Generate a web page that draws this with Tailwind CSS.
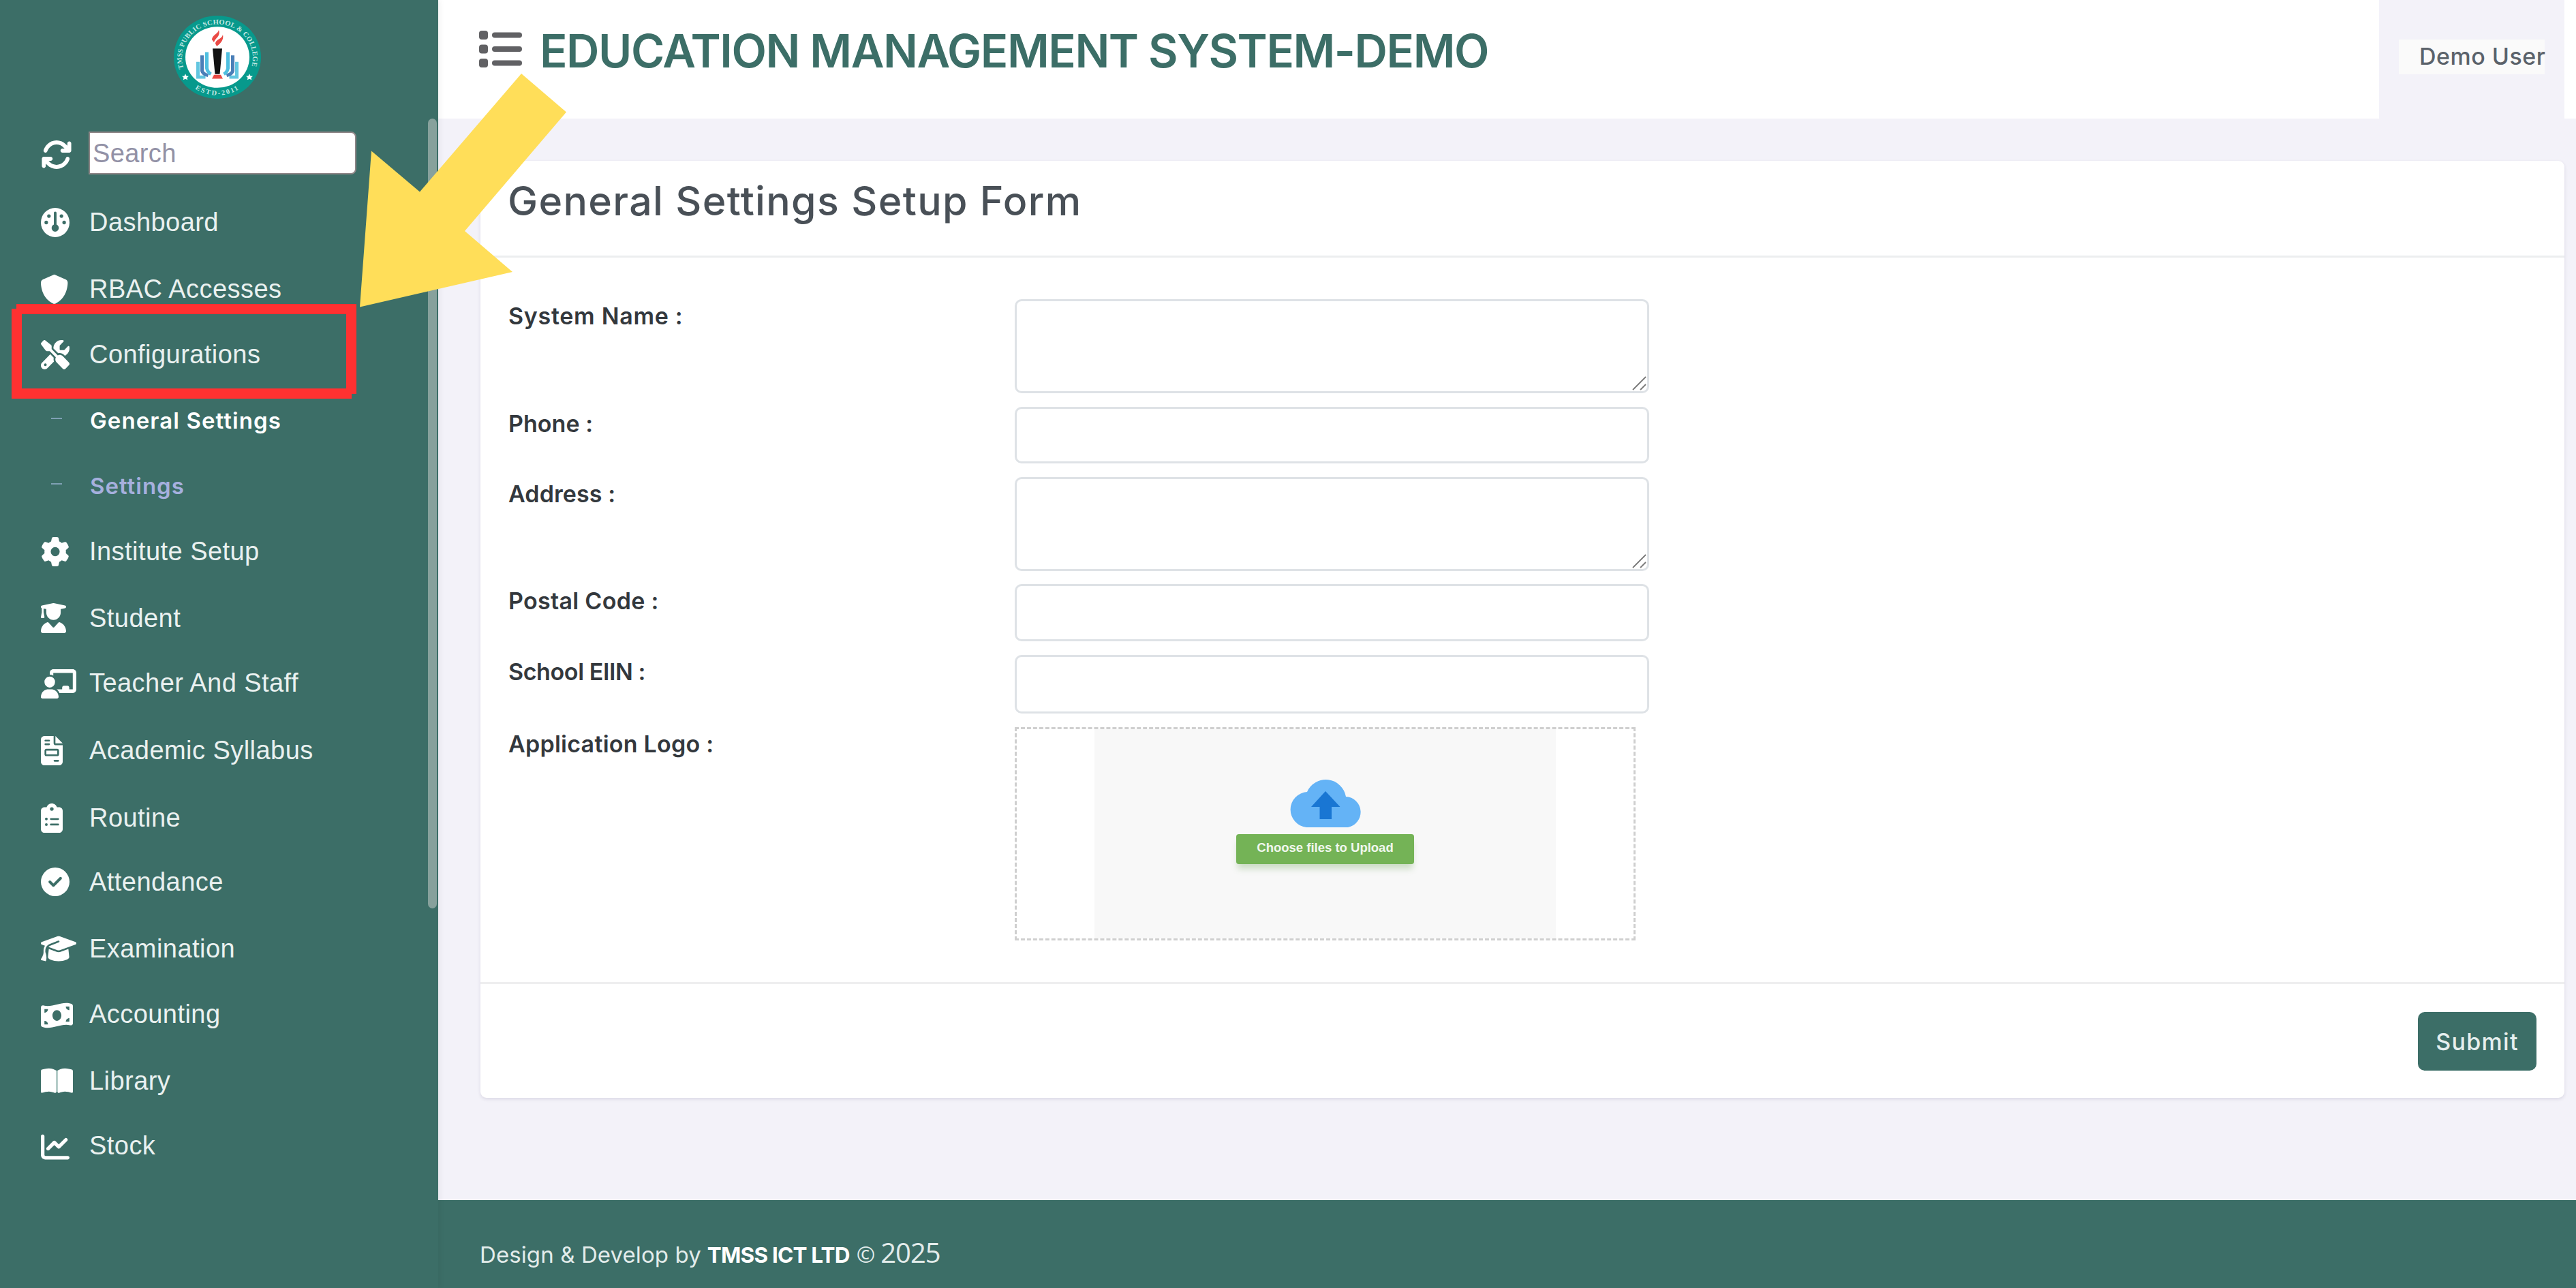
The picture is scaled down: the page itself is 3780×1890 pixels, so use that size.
<!DOCTYPE html>
<html lang="en">
<head>
<meta charset="utf-8">
<title>Education Management System</title>
<script src="https://cdn.jsdelivr.net/npm/@tailwindcss/browser@4"></script>
</head>
<body class="relative h-[1890px] w-[3780px] overflow-hidden bg-[#f3f2f9] font-['Inter',sans-serif]">
<div class="flex h-full">

  <!-- Sidebar -->
  <aside class="relative z-10 flex h-full w-[643px] shrink-0 flex-col bg-[#3c6e67] font-['Liberation_Sans',Arial,sans-serif] text-white shadow-[2px_0_8px_rgba(0,0,0,0.06)]">
    <div class="flex h-[193px] justify-center pr-[5px] pt-[23px]">
      <svg class="h-[122px] w-[128px]" viewBox="-64 -64 128 128" preserveAspectRatio="none">
        <defs>
          <path id="ringTop" d="M-49.5 17A52 52 0 1 1 49.5 17"/>
          <path id="ringBottom" d="M-37 45.5A59 59 0 0 0 37 45.5"/>
        </defs>
        <circle r="64" fill="#07998c"/>
        <circle r="47" fill="#fff"/>
        <g fill="#c4e8e3" font-family="Liberation Serif, serif" font-weight="700" font-size="10.5">
          <text><textPath href="#ringTop" textLength="192">TMSS PUBLIC SCHOOL &amp; COLLEGE</textPath></text>
          <text><textPath href="#ringBottom" startOffset="5" textLength="68">ESTD-2011</textPath></text>
        </g>
        <path fill="#fff" d="M-47 25.500l1.600 3.300 3.400.4-2.600 2.300.8 3.500-3.200-1.800-3.200 1.800.8-3.500-2.600-2.300 3.400-.4z"/>
        <path fill="#fff" d="M47 25.500l1.600 3.300 3.400.4-2.600 2.300.8 3.500-3.200-1.800-3.200 1.800.8-3.500-2.600-2.300 3.400-.4z"/>
        <path fill="#ea4a45" d="M2-42c-1 6-10 8-10 15l3 4C-3-30 5-32 2-42zM8-35C7-28-3-28-3-21l2 4C3-20 10-26 8-35z"/>
        <path fill="#111" d="M-7-13.500H7L3.500 26h-7z"/>
        <path fill="#ea4a45" d="M-5 27H5l3 6H-8z"/>
        <g id="pages" fill="none" stroke-width="5">
          <path stroke="#62c6e0" d="M-28.500 7V30.500h11"/>
          <path stroke="#4a7fb8" d="M-22.500-3V21q1 5 9 7"/>
          <path stroke="#4fbfe0" d="M-15.500-8V17q1 6 6 9"/>
        </g>
        <use href="#pages" transform="scale(-1 1)"/>
      </svg>
    </div>

    <div class="flex h-[88px] pl-[60px]">
      <svg class="mt-[10px] h-[48px] w-[46px] shrink-0" viewBox="0 0 512 512" preserveAspectRatio="none" fill="#fff"><path d="M105.100 202.600c7.700-21.800 20.200-42.300 37.800-59.800c62.500-62.500 163.800-62.500 226.300 0L386.300 160H352c-17.700 0-32 14.300-32 32s14.300 32 32 32H463.900c17.700 0 32-14.300 32-32V80c0-17.700-14.300-32-32-32s-32 14.300-32 32v35.200L414.400 97.600c-87.500-87.500-229.300-87.500-316.800 0C73.200 122 55.600 150.700 44.800 181.400c-5.900 16.700 2.900 34.900 19.500 40.800s34.900-2.900 40.800-19.500zM39 289.300c-5 1.500-9.800 4.200-13.700 8.200c-4 4-6.700 8.800-8.100 14c-.3 1.200-.6 2.500-.8 3.800c-.3 1.700-.4 3.400-.4 5.100V432c0 17.700 14.300 32 32 32s32-14.300 32-32V396.900l17.600 17.500c87.500 87.400 229.300 87.400 316.700 0c24.400-24.400 42.100-53.100 52.900-83.800c5.900-16.700-2.900-34.900-19.500-40.800s-34.900 2.900-40.800 19.500c-7.700 21.800-20.200 42.300-37.800 59.800c-62.500 62.500-163.800 62.500-226.300 0L125.600 352H160c17.700 0 32-14.300 32-32s-14.300-32-32-32H48.400c-3.200 0-6.400.4-9.400 1.300z"/></svg>
      <input type="text" placeholder="Search" class="ml-[24px] h-[63px] w-[393px] rounded-r-[8px] border-2 border-[#8d8586] bg-white px-[4px] pt-[2px] text-[38px] tracking-[0.4px] text-gray-700 placeholder:text-[#9291a6]">
    </div>

    <nav class="flex flex-col text-[38px] leading-[90px] tracking-[0.45px] text-[#eaf1f0]">
      <a class="flex h-[98px] pl-[60px]"><span class="flex h-[90px] w-[71px] items-center"><svg class="h-[43px] w-[42px]" viewBox="0 0 512 512" preserveAspectRatio="none" fill="#fff"><path d="M0 256a256 256 0 1 1 512 0A256 256 0 1 1 0 256zm320 96c0-26.900-16.500-49.900-40-59.300V88c0-13.300-10.700-24-24-24s-24 10.700-24 24V292.700c-23.500 9.500-40 32.500-40 59.300c0 35.300 28.700 64 64 64s64-28.700 64-64zM144 176a32 32 0 1 0 0-64 32 32 0 1 0 0 64zm-16 80a32 32 0 1 0 -64 0 32 32 0 1 0 64 0zm288 32a32 32 0 1 0 0-64 32 32 0 1 0 0 64zM400 144a32 32 0 1 0 -64 0 32 32 0 1 0 64 0z"/></svg></span>Dashboard</a>
      <a class="flex h-[96px] pl-[60px]"><span class="flex h-[90px] w-[71px] items-center"><svg class="h-[43px] w-[42px]" viewBox="16 0 512 512" preserveAspectRatio="none" fill="#fff"><path d="M256 0c4.600 0 9.200 1 13.400 2.900L457.700 82.800c22 9.300 38.400 31 38.300 57.200c-.5 99.200-41.300 280.700-213.600 363.200c-16.700 8-36.100 8-52.800 0C57.300 420.700 16.500 239.200 16 140c-.1-26.200 16.300-47.900 38.300-57.200L242.700 2.900C246.800 1 251.400 0 256 0z"/></svg></span>RBAC Accesses</a>
      <a class="flex h-[95px] pl-[60px]"><span class="flex h-[90px] w-[71px] items-center"><svg class="h-[43px] w-[42px]" viewBox="0 0 512 512" preserveAspectRatio="none" fill="#fff"><path d="M78.600 5C69.100-2.400 55.600-1.500 47 7L7 47c-8.500 8.500-9.400 22-2.100 31.600l80 104c4.500 5.900 11.600 9.400 19 9.400h54.100l109 109c-14.700 29-10 65.400 14.300 89.600l112 112c12.500 12.500 32.800 12.500 45.300 0l64-64c12.500-12.500 12.500-32.800 0-45.300l-112-112c-24.200-24.200-60.600-29-89.600-14.300l-109-109V104c0-7.500-3.500-14.500-9.400-19L78.600 5zM19.900 396.100C7.200 408.800 0 426.100 0 444.100C0 481.600 30.400 512 67.900 512c18 0 35.300-7.200 48-19.900L233.700 374.300c-7.800-20.900-9-43.600-3.600-65.100l-61.700-61.700L19.900 396.100zM512 144c0-10.500-1.100-20.700-3.200-30.500c-2.400-11.200-16.100-14.100-24.200-6l-63.900 63.900c-3 3-7.100 4.700-11.300 4.700H352c-8.800 0-16-7.200-16-16V102.600c0-4.200 1.700-8.300 4.700-11.300l63.900-63.900c8.100-8.100 5.200-21.800-6-24.200C388.700 1.100 378.500 0 368 0C288.500 0 224 64.500 224 144l0 .8 85.300 85.300c36-9.100 75.800 .5 104 28.700L429 274.500c49-23 83-72.800 83-130.500zM56 432a24 24 0 1 1 48 0 24 24 0 1 1 -48 0z"/></svg></span>Configurations</a>
      <a class="flex h-[96px] pl-[75px] font-['Inter',sans-serif] text-[33px] font-semibold leading-[94px] tracking-[1.1px] text-white"><span class="mt-[43px] mr-[41px] h-[2px] w-[16px] bg-[#7fa0b4]"></span>General Settings</a>
      <a class="flex h-[98px] pl-[75px] font-['Inter',sans-serif] text-[33px] font-semibold leading-[94px] tracking-[1px] text-[#a6b0de]"><span class="mt-[43px] mr-[41px] h-[2px] w-[16px] bg-[#7fa0b4]"></span>Settings</a>
      <a class="flex h-[98px] pl-[60px]"><span class="flex h-[90px] w-[71px] items-center"><svg class="h-[43px] w-[42px]" viewBox="0 0 512 512" preserveAspectRatio="none" fill="#fff"><path d="M495.900 166.600c3.200 8.700 .5 18.400-6.400 24.600l-43.300 39.400c1.100 8.300 1.700 16.800 1.700 25.400s-.6 17.100-1.700 25.400l43.300 39.400c6.900 6.200 9.600 15.900 6.400 24.600c-4.400 11.900-9.700 23.300-15.800 34.300l-4.700 8.100c-6.600 11-14 21.400-22.100 31.200c-5.900 7.200-15.700 9.600-24.500 6.800l-55.700-17.700c-13.400 10.300-28.200 18.900-44 25.400l-12.500 57.100c-2 9.100-9 16.300-18.200 17.800c-13.800 2.300-28 3.500-42.500 3.500s-28.700-1.200-42.500-3.500c-9.200-1.500-16.200-8.700-18.200-17.800l-12.500-57.100c-15.800-6.500-30.600-15.100-44-25.400L83.100 425.900c-8.800 2.800-18.600 .3-24.500-6.800c-8.100-9.800-15.500-20.200-22.100-31.200l-4.700-8.100c-6.100-11-11.400-22.400-15.800-34.300c-3.200-8.700-.5-18.400 6.400-24.600l43.300-39.400C64.600 273.100 64 264.600 64 256s.6-17.100 1.700-25.400L22.400 191.200c-6.900-6.200-9.600-15.900-6.400-24.600c4.400-11.900 9.700-23.300 15.800-34.300l4.700-8.100c6.600-11 14-21.400 22.100-31.200c5.900-7.200 15.700-9.600 24.500-6.800l55.700 17.700c13.400-10.300 28.200-18.900 44-25.400l12.500-57.100c2-9.100 9-16.300 18.200-17.800C227.300 1.200 241.500 0 256 0s28.700 1.200 42.500 3.500c9.200 1.500 16.200 8.700 18.200 17.800l12.500 57.100c15.800 6.500 30.600 15.100 44 25.400l55.700-17.700c8.800-2.800 18.600-.3 24.500 6.800c8.100 9.800 15.500 20.200 22.100 31.200l4.700 8.100c6.100 11 11.400 22.400 15.800 34.300zM256 336a80 80 0 1 0 0-160 80 80 0 1 0 0 160z"/></svg></span>Institute Setup</a>
      <a class="flex h-[95px] pl-[60px]"><span class="flex h-[90px] w-[71px] items-center"><svg class="h-[44px] w-[37px]" viewBox="0 0 448 512" preserveAspectRatio="none" fill="#fff"><path d="M219.300 .5c3.100-.6 6.300-.6 9.400 0l200 40C439.900 42.700 448 52.600 448 64s-8.100 21.300-19.300 23.500L352 102.900V160c0 70.700-57.300 128-128 128s-128-57.300-128-128V102.900L48 93.300v65.100l15.700 78.400c.9 4.700-.3 9.600-3.300 13.300s-7.600 5.900-12.400 5.900H16c-4.800 0-9.300-2.100-12.400-5.900s-4.300-8.600-3.300-13.300L16 158.400V86.600C6.500 83.300 0 74.300 0 64C0 52.600 8.100 42.700 19.300 40.500l200-40zM111.900 327.700c10.500-3.400 21.800 .4 29.400 8.500l71 75.500c6.300 6.700 17 6.700 23.300 0l71-75.500c7.600-8.100 18.900-11.900 29.400-8.500C401 348.600 448 409.400 448 481.300c0 17-13.800 30.700-30.700 30.700H30.700C13.800 512 0 498.200 0 481.300c0-71.900 47-132.700 111.900-153.600z"/></svg></span>Student</a>
      <a class="flex h-[99px] pl-[60px]"><span class="flex h-[90px] w-[71px] items-center"><svg class="mt-[3px] h-[43px] w-[52px]" viewBox="0 0 640 512" preserveAspectRatio="none" fill="#fff"><path d="M160 64c0-35.300 28.700-64 64-64H576c35.300 0 64 28.700 64 64V352c0 35.300-28.700 64-64 64H336.800c-11.800-25.500-29.900-47.500-52.400-64H384V320c0-17.700 14.300-32 32-32h64c17.700 0 32 14.300 32 32v32h64V64L224 64v49.100C205.200 102.200 183.300 96 160 96V64zm0 64a96 96 0 1 1 0 192 96 96 0 1 1 0-192zM133.300 352h53.300C260.300 352 320 411.700 320 485.300c0 14.700-11.900 26.700-26.700 26.700H26.700C11.900 512 0 500.100 0 485.300C0 411.700 59.700 352 133.300 352z"/></svg></span>Teacher And Staff</a>
      <a class="flex h-[99px] pl-[60px]"><span class="flex h-[90px] w-[71px] items-center"><svg class="h-[43px] w-[32px]" viewBox="0 0 384 512" preserveAspectRatio="none" fill="#fff"><path d="M64 0C28.700 0 0 28.700 0 64V448c0 35.300 28.700 64 64 64H320c35.300 0 64-28.700 64-64V160H256c-17.700 0-32-14.300-32-32V0H64zM256 0V128H384L256 0zM80 64h64c8.800 0 16 7.200 16 16s-7.200 16-16 16H80c-8.800 0-16-7.200-16-16s7.200-16 16-16zm0 64h64c8.800 0 16 7.200 16 16s-7.200 16-16 16H80c-8.800 0-16-7.200-16-16s7.200-16 16-16zm16 96H288c17.700 0 32 14.300 32 32v64c0 17.700-14.300 32-32 32H96c-17.700 0-32-14.300-32-32V256c0-17.700 14.300-32 32-32zm0 32v64H288V256H96zM240 416h64c8.800 0 16 7.200 16 16s-7.200 16-16 16H240c-8.800 0-16-7.200-16-16s7.200-16 16-16z"/></svg></span>Academic Syllabus</a>
      <a class="flex h-[94px] pl-[60px]"><span class="flex h-[90px] w-[71px] items-center"><svg class="h-[43px] w-[32px]" viewBox="0 0 384 512" preserveAspectRatio="none" fill="#fff"><path d="M192 0c-41.800 0-77.400 26.700-90.500 64H64C28.700 64 0 92.700 0 128V448c0 35.300 28.700 64 64 64H320c35.300 0 64-28.700 64-64V128c0-35.300-28.700-64-64-64H282.500C269.400 26.700 233.800 0 192 0zm0 64a32 32 0 1 1 0 64 32 32 0 1 1 0-64zM72 272a24 24 0 1 1 48 0 24 24 0 1 1 -48 0zm104-16H304c8.800 0 16 7.200 16 16s-7.200 16-16 16H176c-8.800 0-16-7.200-16-16s7.200-16 16-16zM72 368a24 24 0 1 1 48 0 24 24 0 1 1 -48 0zm88 0c0-8.800 7.200-16 16-16H304c8.800 0 16 7.200 16 16s-7.200 16-16 16H176c-8.800 0-16-7.200-16-16z"/></svg></span>Routine</a>
      <a class="flex h-[98px] pl-[60px]"><span class="flex h-[90px] w-[71px] items-center"><svg class="h-[42px] w-[42px]" viewBox="0 0 512 512" preserveAspectRatio="none" fill="#fff"><path d="M256 512A256 256 0 1 0 256 0a256 256 0 1 0 0 512zM369 209L241 337c-9.400 9.400-24.600 9.400-33.900 0l-64-64c-9.400-9.400-9.400-24.600 0-33.900s24.600-9.400 33.900 0l47 47L335 175c9.400-9.400 24.600-9.400 33.900 0s9.400 24.600 0 33.900z"/></svg></span>Attendance</a>
      <a class="flex h-[96px] pl-[60px]"><span class="flex h-[90px] w-[71px] items-center"><svg class="h-[42px] w-[52px]" viewBox="0 0 640 512" preserveAspectRatio="none" fill="#fff"><path d="M320 32c-8.100 0-16.100 1.400-23.700 4.100L15.800 137.400C6.300 140.900 0 149.900 0 160s6.300 19.100 15.800 22.600l57.900 20.900C57.300 229.300 48 259.800 48 291.900v28.100c0 28.400-10.800 57.700-22.300 80.800c-6.500 13-13.900 25.800-22.500 37.600C0 442.700-.9 448.300 .9 453.400s6 8.900 11.200 10.200l64 16c4.200 1.100 8.700 .3 12.400-2s6.300-6.100 7.100-10.400c8.600-42.800 4.300-81.200-2.100-108.700C90.300 344.300 86 329.800 80 316.500V291.900c0-30.200 10.200-58.700 27.900-81.500c12.900-15.500 29.600-28 49.200-35.700l157-61.700c8.200-3.200 17.500 .8 20.700 9s-.8 17.500-9 20.700l-157 61.700c-12.400 4.900-23.300 12.400-32.200 21.600l159.600 57.600c7.600 2.700 15.600 4.100 23.700 4.100s16.100-1.400 23.700-4.100L624.200 182.600c9.500-3.400 15.800-12.500 15.800-22.600s-6.300-19.100-15.800-22.600L343.700 36.100C336.100 33.400 328.100 32 320 32zM128 408c0 35.300 86 72 192 72s192-36.700 192-72L496.700 262.600 354.500 314c-11.100 4-22.800 6-34.500 6s-23.500-2-34.500-6L143.300 262.600 128 408z"/></svg></span>Examination</a>
      <a class="flex h-[98px] pl-[60px]"><span class="flex h-[90px] w-[71px] items-center"><svg class="mt-[3px] h-[42px] w-[47px]" viewBox="0 0 576 512" preserveAspectRatio="none" fill="#fff"><path d="M0 112.500V422.300c0 18 10.100 35 27 41.300c87 32.500 174 10.300 261-11.900c79.800-20.300 159.600-40.700 239.300-18.900c23 6.300 48.700-9.500 48.700-33.400V89.700c0-18-10.100-35-27-41.300C462 15.900 375 38.100 288 60.300C208.200 80.600 128.400 100.900 48.700 79.100C25.600 72.800 0 88.600 0 112.500zM288 352c-44.200 0-80-43-80-96s35.800-96 80-96s80 43 80 96s-35.800 96-80 96zM64 352c35.300 0 64 28.700 64 64H64V352zm64-208c0 35.300-28.700 64-64 64V144h64zM512 304v64H448c0-35.300 28.700-64 64-64zM448 96h64v64c-35.300 0-64-28.700-64-64z"/></svg></span>Accounting</a>
      <a class="flex h-[95px] pl-[60px]"><span class="flex h-[90px] w-[71px] items-center"><svg class="h-[42px] w-[47px]" viewBox="0 0 576 512" preserveAspectRatio="none" fill="#fff"><path fill="#a9c4c0" d="M265 70h46v390h-46z"/><path d="M249.600 471.500c10.800 3.800 22.400-4.100 22.400-15.500V78.600c0-4.200-1.600-8.400-5-11C247.400 52 202.400 32 144 32C93.500 32 46.300 45.300 18.100 56.100C6.800 60.500 0 71.700 0 83.800V454.100c0 11.900 12.800 20.200 24.100 16.500C55.600 460.100 105.500 448 144 448c33.900 0 79 14 105.600 23.500zm76.800 0C353 462 398.100 448 432 448c38.500 0 88.400 12.100 119.900 22.600c11.300 3.800 24.100-4.600 24.100-16.500V83.800c0-12.100-6.800-23.300-18.100-27.600C529.700 45.300 482.500 32 432 32c-58.400 0-103.400 20-123 35.600c-3.300 2.600-5 6.800-5 11V456c0 11.400 11.700 19.300 22.400 15.500z"/></svg></span>Library</a>
      <a class="flex h-[96px] pl-[60px]"><span class="flex h-[90px] w-[71px] items-center"><svg class="mt-[4px] h-[42px] w-[42px]" viewBox="0 0 512 512" preserveAspectRatio="none" fill="#fff"><path d="M64 64c0-17.700-14.300-32-32-32S0 46.300 0 64V400c0 44.200 35.800 80 80 80H480c17.700 0 32-14.300 32-32s-14.300-32-32-32H80c-8.800 0-16-7.200-16-16V64zm406.600 86.600c12.500-12.500 12.500-32.800 0-45.300s-32.800-12.500-45.300 0L320 210.700l-57.400-57.400c-12.500-12.500-32.800-12.500-45.300 0l-112 112c-12.500 12.500-12.500 32.800 0 45.300s32.800 12.500 45.300 0L240 221.300l57.400 57.400c12.500 12.500 32.800 12.500 45.300 0l128-128z"/></svg></span>Stock</a>
    </nav>

    <!-- Scroll thumb -->
    <div class="absolute right-[2px] top-[174px] h-[1159px] w-[13px] rounded-full bg-[#87a19c]"></div>
  </aside>

  <!-- Page -->
  <div class="flex flex-1 flex-col">
    <header class="flex h-[174px] bg-white pl-[60px] pr-[17px]">
      <svg class="mt-[44px] h-[56px] w-[63px]" viewBox="0 0 63 56" fill="#616164">
        <rect x="0" y="1" width="13" height="13" rx="4"/><rect x="0" y="21.500" width="13" height="13" rx="4"/><rect x="0" y="42" width="13" height="13" rx="4"/>
        <rect x="19" y="3.500" width="44" height="8" rx="4"/><rect x="19" y="24" width="44" height="8" rx="4"/><rect x="19" y="44.500" width="44" height="8" rx="4"/>
      </svg>
      <h1 class="ml-[26px] whitespace-nowrap text-[67px] font-semibold leading-[149px] tracking-[-1.45px] text-[#3c6e67]">EDUCATION MANAGEMENT SYSTEM-DEMO</h1>
      <div class="ml-auto w-[272px] bg-[#f3f2f9] pl-[29px] pt-[58px]">
        <div class="h-[51px] w-[214px] whitespace-nowrap bg-[#fafafa] pl-[30px] text-[34px] font-medium leading-[49px] tracking-[0.5px] text-[#5b626a]">Demo User</div>
      </div>
    </header>

    <main class="flex-1 pl-[62px] pr-[17px] pt-[62px]">
      <section class="rounded-[9px] bg-white shadow-[0_2px_5px_rgba(40,30,80,0.12)]">
        <h2 class="h-[142px] border-b-3 border-[#eceeef] pl-[40px] text-[59px] font-medium leading-[118px] tracking-[1.35px] text-[#495057]">General Settings Setup Form</h2>

        <form class="flex flex-col pb-[61px] pl-[41px] pt-[61px] text-[34px] font-semibold leading-[50px] text-[#33383d]">
          <div class="mb-[20px] flex"><label class="w-[743px] tracking-[0.7px]">System Name :</label>
            <div class="flex h-[138px] w-[931px] items-end justify-end rounded-[10px] border-3 border-[#dee2e6] p-[1px]"><svg class="h-[21px] w-[21px]" viewBox="0 0 21 21" fill="none" stroke="#7a7a7a" stroke-width="1.800"><path d="M1 20L20 1M12 20L20 12"/></svg></div></div>
          <div class="mb-[20px] flex"><label class="w-[743px] tracking-[0.05px]">Phone :</label><input class="h-[83px] w-[931px] rounded-[10px] border-3 border-[#dee2e6]"></div>
          <div class="mb-[19px] flex"><label class="w-[743px] tracking-[0.1px]">Address :</label>
            <div class="flex h-[138px] w-[931px] items-end justify-end rounded-[10px] border-3 border-[#dee2e6] p-[1px]"><svg class="h-[21px] w-[21px]" viewBox="0 0 21 21" fill="none" stroke="#7a7a7a" stroke-width="1.800"><path d="M1 20L20 1M12 20L20 12"/></svg></div></div>
          <div class="mb-[20px] flex"><label class="w-[743px] tracking-[0.3px]">Postal Code :</label><input class="h-[84px] w-[931px] rounded-[10px] border-3 border-[#dee2e6]"></div>
          <div class="mb-[20px] flex"><label class="w-[743px] tracking-[-0.4px]">School EIIN :</label><input class="h-[86px] w-[931px] rounded-[10px] border-3 border-[#dee2e6]"></div>
          <div class="flex"><label class="w-[743px] tracking-[0.25px]">Application Logo :</label>
            <div class="flex h-[313px] w-[911px] justify-center border-3 border-dashed border-[#cfcfcf]">
              <div class="flex w-[677px] flex-col items-center bg-[#f8f8f8] pt-[73px]">
                <svg class="h-[71px] w-[104px]" viewBox="0 0 104 71"><path fill="#64b3f6" d="M24 71A26.100 26.100 0 0 1 25 19A30 30 0 0 1 82 26A22.700 22.700 0 0 1 85 71z"/><path fill="#1976d3" d="M52 18L73.500 41H61V59H43.500V41H31z"/></svg>
                <div class="mt-[10px] flex h-[44px] w-[261px] items-center justify-center whitespace-nowrap rounded-[4px] bg-[#74b356] pb-[4px] font-['Liberation_Sans',Arial,sans-serif] text-[18.500px] font-bold leading-none text-white/90 shadow-[0_9px_10px_-2px_rgba(90,150,70,0.28)]">Choose files to Upload</div>
              </div>
            </div></div>
        </form>

        <div class="flex justify-end border-t-3 border-[#eeeeef] pb-[40px] pr-[41px] pt-[41px]">
          <button class="h-[86px] w-[174px] rounded-[10px] bg-[#3c6e67] text-[34px] font-medium tracking-[1.3px] text-[#e6efee]">Submit</button>
        </div>
      </section>
    </main>

    <footer class="flex h-[129px] items-baseline whitespace-pre bg-[#3c6e67] pl-[61px] pt-[46px] text-[33px] leading-[61px] text-[#e3eceb]">
      <span class="tracking-[0.1px]">Design &amp; Develop by</span><strong class="ml-[9px] text-[31.5px] tracking-[-0.8px] text-white">TMSS ICT LTD</strong><span class="ml-[10px] font-['Open_Sans',sans-serif] text-[33px]">©</span><span class="ml-[8px] font-['Open_Sans',sans-serif] text-[40px] tracking-[-1px]">2025</span>
    </footer>
  </div>
</div>

<!-- Callout: highlighted menu entry and arrow -->
<svg class="pointer-events-none absolute left-0 top-0 z-20 h-[600px] w-[900px]" viewBox="0 0 900 600">
  <path fill="#ff3131" d="M24 446H523V578H516V585H17V453H24zM32 461V570H508V461z"/>
  <path fill="#ffde59" d="M545 221.500L616 281.500L765 108L831 164.500L682 339L752 399L528 450.500z"/>
</svg>
</body>
</html>
